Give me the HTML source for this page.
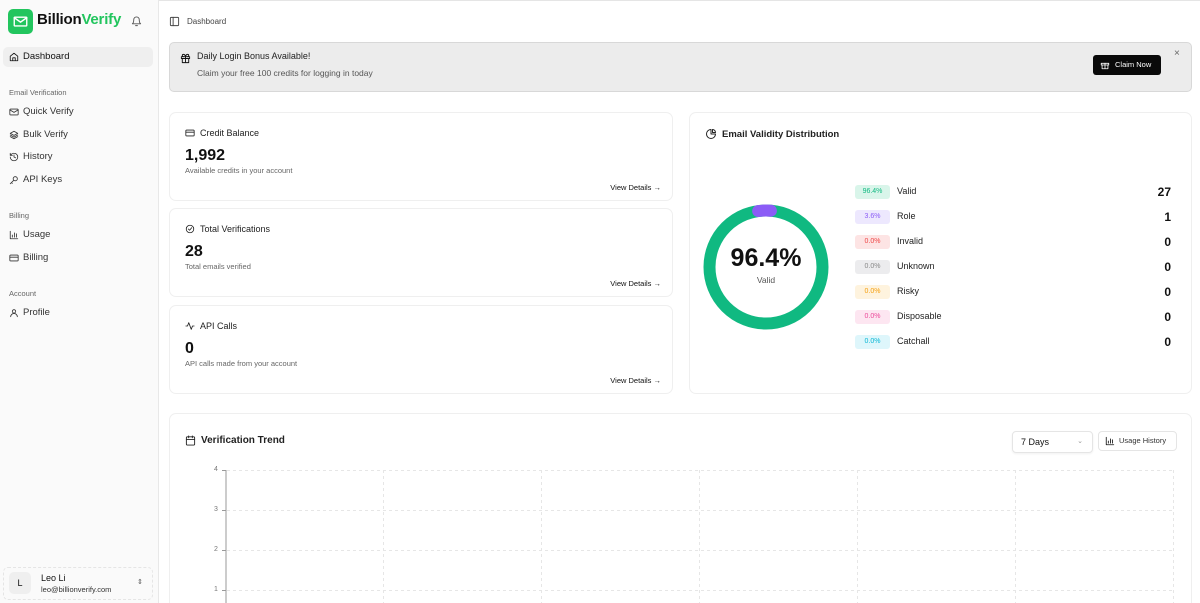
<!DOCTYPE html>
<html><head><meta charset="utf-8"><style>
*{box-sizing:border-box;margin:0;padding:0}
html,body{width:1200px;height:603px;overflow:hidden}
body{font-family:"Liberation Sans",sans-serif;color:#111;background:#fff;position:relative}
.sb{position:absolute;left:0;top:0;width:159px;height:603px;background:#fafafa;border-right:1px solid #e8e8e8}
.abs{position:absolute}
.nav{position:absolute;left:9px;font-size:9.5px;color:#333;display:flex;align-items:center;gap:4px}
.nav svg{width:10px;height:10px;display:block}
.sec{position:absolute;left:9px;font-size:7.5px;color:#666}
.card{position:absolute;background:#fff;border:1px solid #efefef;border-radius:7px}
.ct{position:absolute;left:15px;top:15px;font-size:9px;display:flex;align-items:center;gap:5px;color:#222}
.ct svg{display:block}
.cv{position:absolute;left:15px;top:34px;font-size:16px;font-weight:bold}
.cs{position:absolute;left:15px;top:53px;font-size:7.5px;color:#666}
.vd{position:absolute;right:11px;bottom:8px;font-size:7.5px;color:#111}
.pill{position:absolute;left:165px;width:35px;height:14px;border-radius:3px;font-size:7px;text-align:center;line-height:14px}
.lb{position:absolute;left:207px;font-size:9px;color:#222}
.nm{position:absolute;right:20px;font-size:12px;font-weight:bold}
svg{fill:none;stroke:currentColor;stroke-width:2;stroke-linecap:round;stroke-linejoin:round}
</style></head><body>
<div class="abs" style="left:0;top:0;width:1200px;height:1px;background:#e5e5e5"></div>
<div class="sb">
 <div class="abs" style="left:8px;top:9px;width:25px;height:25px;border-radius:5px;background:#22c55e">
  <svg viewBox="0 0 24 24" style="position:absolute;left:5px;top:5px;width:15px;height:15px;stroke:#fff;stroke-width:2.2"><rect x="2" y="5" width="20" height="14" rx="1"/><path d="M2 6l10 7 10-7"/></svg></div>
 <div class="abs" style="left:37px;top:11px;font-size:15px;font-weight:bold;letter-spacing:-0.2px">Billion<span style="color:#22c55e">Verify</span></div>
 <svg class="abs" viewBox="0 0 24 24" style="left:131px;top:16px;width:11px;height:11px;color:#555"><path d="M6 8a6 6 0 0112 0c0 7 3 9 3 9H3s3-2 3-9M10 21h4"/></svg>
 <div class="abs" style="left:3px;top:47px;width:150px;height:20px;border-radius:5px;background:#efefef"></div>
 <div class="nav" style="top:51px;color:#111"><svg viewBox="0 0 24 24"><path d="M3 10l9-7 9 7v11H3z M9 21v-7h6v7"/></svg>Dashboard</div>
 <div class="sec" style="top:88px">Email Verification</div>
 <div class="nav" style="top:106px"><svg viewBox="0 0 24 24"><rect x="2" y="5" width="20" height="14" rx="2"/><path d="M2 7l10 6 10-6"/></svg>Quick Verify</div>
 <div class="nav" style="top:129px"><svg viewBox="0 0 24 24"><path d="M12 3l9 5-9 5-9-5z M3 12l9 5 9-5 M3 16l9 5 9-5"/></svg>Bulk Verify</div>
 <div class="nav" style="top:151px"><svg viewBox="0 0 24 24"><path d="M3 12a9 9 0 109-9 9 9 0 00-7 3L3 8 M3 3v5h5 M12 7v5l4 2"/></svg>History</div>
 <div class="nav" style="top:174px"><svg viewBox="0 0 24 24"><circle cx="15" cy="9" r="5"/><path d="M11 13l-8 8 M6 18l2 2"/></svg>API Keys</div>
 <div class="sec" style="top:211px">Billing</div>
 <div class="nav" style="top:229px"><svg viewBox="0 0 24 24"><path d="M3 3v18h18 M8 17v-5 M13 17V7 M18 17v-8"/></svg>Usage</div>
 <div class="nav" style="top:252px"><svg viewBox="0 0 24 24"><rect x="2" y="5" width="20" height="14" rx="2"/><path d="M2 10h20"/></svg>Billing</div>
 <div class="sec" style="top:289px">Account</div>
 <div class="nav" style="top:307px"><svg viewBox="0 0 24 24"><circle cx="12" cy="8" r="4"/><path d="M4 21a8 8 0 0116 0"/></svg>Profile</div>
 <div class="abs" style="left:3px;top:567px;width:150px;height:33px;border:1px dashed #e5e5e5;border-radius:5px"></div>
 <div class="abs" style="left:9px;top:572px;width:22px;height:22px;border-radius:5px;background:#efefef;font-size:9px;text-align:center;line-height:22px">L</div>
 <div class="abs" style="left:41px;top:573px;font-size:9px">Leo Li</div>
 <div class="abs" style="left:41px;top:585px;font-size:7.5px;color:#333">leo@billionverify.com</div>
 <div class="abs" style="left:137px;top:578px;font-size:7px;color:#555">⇕</div>
</div>
<svg class="abs" viewBox="0 0 24 24" style="left:169px;top:16px;width:11px;height:11px;color:#444"><rect x="3" y="3" width="18" height="18" rx="2"/><path d="M9 3v18"/></svg>
<div class="abs" style="left:187px;top:17px;font-size:8px;color:#444">Dashboard</div>
<div class="abs" style="left:169px;top:42px;width:1023px;height:50px;background:#ececec;border:1px solid #d8d8d8;border-radius:5px"></div>
<svg class="abs" viewBox="0 0 24 24" style="left:180px;top:53px;width:11px;height:11px"><rect x="3" y="8" width="18" height="4"/><path d="M12 8v13 M19 12v9H5v-9 M7.5 8a2.5 2.5 0 010-5C11 3 12 8 12 8s1-5 4.5-5a2.5 2.5 0 010 5"/></svg>
<div class="abs" style="left:197px;top:51px;font-size:9px;color:#222">Daily Login Bonus Available!</div>
<div class="abs" style="left:197px;top:68px;font-size:8.5px;color:#555">Claim your free 100 credits for logging in today</div>
<div class="abs" style="left:1093px;top:55px;width:68px;height:20px;background:#0a0a0a;border-radius:3px;color:#fff;font-size:7.5px;line-height:20px;padding-left:22px">Claim Now</div>
<svg class="abs" viewBox="0 0 24 24" style="left:1100px;top:60px;width:10px;height:10px;color:#fff"><rect x="3" y="8" width="18" height="4"/><path d="M12 8v13 M19 12v9H5v-9"/></svg>
<div class="abs" style="left:1174px;top:48px;font-size:10px;color:#666">×</div>

<div class="card" style="left:169px;top:112px;width:504px;height:89px"><div class="ct"><svg viewBox="0 0 24 24" style="width:10px;height:10px"><rect x="2" y="5" width="20" height="14" rx="2"/><path d="M2 10h20"/></svg>Credit Balance</div><div class="cv">1,992</div><div class="cs">Available credits in your account</div><div class="vd">View Details →</div></div>
<div class="card" style="left:169px;top:208px;width:504px;height:89px"><div class="ct"><svg viewBox="0 0 24 24" style="width:10px;height:10px"><circle cx="12" cy="12" r="9"/><path d="M8 12l3 3 5-6"/></svg>Total Verifications</div><div class="cv">28</div><div class="cs">Total emails verified</div><div class="vd">View Details →</div></div>
<div class="card" style="left:169px;top:305px;width:504px;height:89px"><div class="ct"><svg viewBox="0 0 24 24" style="width:10px;height:10px"><path d="M2 12h4l3-8 6 16 3-8h4"/></svg>API Calls</div><div class="cv">0</div><div class="cs">API calls made from your account</div><div class="vd">View Details →</div></div>

<div class="card" style="left:689px;top:112px;width:503px;height:282px">
 <div class="ct" style="font-weight:bold;font-size:9.5px"><svg viewBox="0 0 24 24" style="width:12px;height:12px"><path d="M21 12A9 9 0 1112 3v9z M15 3a6 6 0 016 6h-6z"/></svg>Email Validity Distribution</div>
 <svg class="abs" viewBox="0 0 130 130" style="left:11px;top:89px;width:130px;height:130px;stroke-linecap:butt">
  <circle cx="65" cy="65" r="56.5" stroke="#10b981" stroke-width="12"/>
  <circle cx="65" cy="65" r="56.5" stroke="#8b5cf6" stroke-width="12" stroke-dasharray="12.8 400" stroke-linecap="round" transform="rotate(-98 65 65)"/>
 </svg>
 <div class="abs" style="left:11px;top:131px;width:130px;text-align:center;font-size:25px;font-weight:bold">96.4%</div>
 <div class="abs" style="left:11px;top:162px;width:130px;text-align:center;font-size:8.5px;color:#555">Valid</div>
 <div class="pill" style="top:72px;background:#d9f5ea;color:#10b981">96.4%</div><div class="lb" style="top:73px">Valid</div><div class="nm" style="top:72px">27</div>
 <div class="pill" style="top:97px;background:#ede8fe;color:#8b5cf6">3.6%</div><div class="lb" style="top:98px">Role</div><div class="nm" style="top:97px">1</div>
 <div class="pill" style="top:122px;background:#fde4e4;color:#ef4444">0.0%</div><div class="lb" style="top:123px">Invalid</div><div class="nm" style="top:122px">0</div>
 <div class="pill" style="top:147px;background:#ececee;color:#888">0.0%</div><div class="lb" style="top:148px">Unknown</div><div class="nm" style="top:147px">0</div>
 <div class="pill" style="top:172px;background:#fef3de;color:#f59e0b">0.0%</div><div class="lb" style="top:173px">Risky</div><div class="nm" style="top:172px">0</div>
 <div class="pill" style="top:197px;background:#fde6f1;color:#ec4899">0.0%</div><div class="lb" style="top:198px">Disposable</div><div class="nm" style="top:197px">0</div>
 <div class="pill" style="top:222px;background:#def6fb;color:#06b6d4">0.0%</div><div class="lb" style="top:223px">Catchall</div><div class="nm" style="top:222px">0</div>
</div>

<div class="card" style="left:169px;top:413px;width:1023px;height:200px">
 <div class="ct" style="top:21px;font-weight:bold;font-size:10px"><svg viewBox="0 0 24 24" style="width:11px;height:11px"><rect x="3" y="4" width="18" height="18" rx="2"/><path d="M16 2v4 M8 2v4 M3 10h18"/></svg>Verification Trend</div>
 <div class="abs" style="left:842px;top:17px;width:81px;height:22px;border:1px solid #e5e5e5;border-radius:4px;box-shadow:0 1px 2px rgba(0,0,0,.06);font-size:9px;line-height:20px;padding-left:8px">7 Days<span style="position:absolute;right:9px;color:#999;font-size:7px">⌄</span></div>
 <div class="abs" style="left:928px;top:17px;width:79px;height:20px;border:1px solid #e5e5e5;border-radius:4px;font-size:7.5px;line-height:18px;padding-left:20px;color:#333">Usage History</div>
 <svg class="abs" viewBox="0 0 24 24" style="left:935px;top:22px;width:10px;height:10px"><path d="M3 3v18h18 M8 17v-5 M13 17V7 M18 17v-8"/></svg>
</div>
<svg class="abs" style="left:0;top:0;width:1200px;height:603px;stroke-linecap:butt" viewBox="0 0 1200 603">
 <g stroke="#e6e6e6" stroke-width="1" stroke-dasharray="3 3">
  <path d="M227 470.5H1173 M227 510.5H1173 M227 550.5H1173 M227 590.5H1173"/>
  <path d="M383.5 470V603 M541.5 470V603 M699.5 470V603 M857.5 470V603 M1015.5 470V603 M1173.5 470V603"/>
 </g>
 <path d="M226 470V603" stroke="#bbb" stroke-width="1.5"/>
 <path d="M222 470.5h4 M222 510.5h4 M222 550.5h4 M222 590.5h4" stroke="#999" stroke-width="1"/>
</svg>
<div class="abs" style="left:214px;top:466px;font-size:7px;color:#777">4</div>
<div class="abs" style="left:214px;top:506px;font-size:7px;color:#777">3</div>
<div class="abs" style="left:214px;top:546px;font-size:7px;color:#777">2</div>
<div class="abs" style="left:214px;top:586px;font-size:7px;color:#777">1</div>
</body></html>
